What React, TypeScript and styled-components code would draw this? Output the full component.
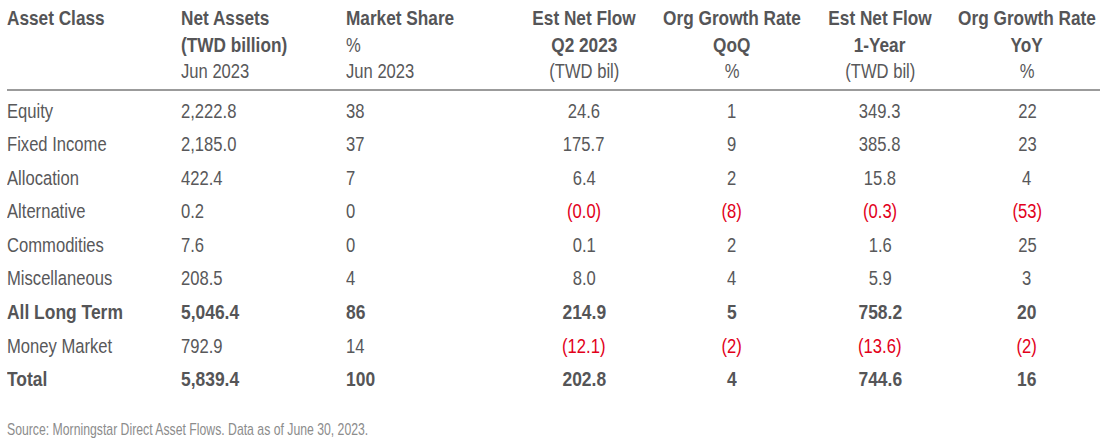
import React from 'react';
import styled, { createGlobalStyle, css } from 'styled-components';

const GlobalStyle = createGlobalStyle`
  html, body {
    margin: 0;
    padding: 0;
    background: #ffffff;
  }
  body {
    font-family: 'Liberation Sans', Arial, sans-serif;
    color: #58585a;
  }
`;

// column widths so the centred columns sit where the original chart has them
const COLUMNS = '174px 165px 164px 148px 148px 148px 146px';

const Page = styled.div`
  padding: 5px 8px 0 7px;
  width: 1093px;
`;

const Table = styled.div`
  display: grid;
  grid-template-columns: ${COLUMNS};
`;

// Arial squeezed to read like the condensed face of the original
const Narrow = styled.span<{ $center?: boolean; $squeeze?: number }>`
  display: inline-block;
  white-space: nowrap;
  transform: scaleX(${(p) => p.$squeeze ?? 0.81});
  transform-origin: ${(p) => (p.$center ? 'center' : 'left')} center;
`;

const HeadCell = styled.div<{ $center?: boolean }>`
  display: flex;
  flex-direction: column;
  align-items: ${(p) => (p.$center ? 'center' : 'flex-start')};
  line-height: 26.5px;
  padding-bottom: 4px;
  border-bottom: 2px solid #9b9b9b;
`;

const HeadTitle = styled(Narrow)`
  font-size: 21px;
  font-weight: 700;
  color: #555557;
`;

const HeadSub = styled(Narrow)`
  font-size: 20.5px;
  font-weight: 400;
`;

const Cell = styled.div<{ $center?: boolean; $bold?: boolean; $neg?: boolean; $first?: boolean }>`
  font-size: ${(p) => (p.$bold ? 21 : 20.5)}px;
  line-height: 33.6px;
  white-space: nowrap;
  text-align: ${(p) => (p.$center ? 'center' : 'left')};
  font-weight: ${(p) => (p.$bold ? 700 : 400)};
  color: ${(p) => (p.$neg ? '#e2001a' : p.$bold ? '#555557' : '#58585a')};
  ${(p) =>
    p.$first &&
    css`
      margin-top: 3px;
    `}
`;

const Source = styled.p`
  margin: 24px 0 0;
  font-size: 17px;
  line-height: 19px;
  color: #8c8c8c;
`;

type Row = {
  label: string;
  values: string[];
  bold?: boolean;
};

const headers: { lines: string[]; sub: string[]; center?: boolean }[] = [
  { lines: ['Asset Class'], sub: ['\u00a0', '\u00a0'] },
  { lines: ['Net Assets', '(TWD billion)'], sub: ['Jun 2023'] },
  { lines: ['Market Share'], sub: ['%', 'Jun 2023'] },
  { lines: ['Est Net Flow', 'Q2 2023'], sub: ['(TWD bil)'], center: true },
  { lines: ['Org Growth Rate', 'QoQ'], sub: ['%'], center: true },
  { lines: ['Est Net Flow', '1-Year'], sub: ['(TWD bil)'], center: true },
  { lines: ['Org Growth Rate', 'YoY'], sub: ['%'], center: true },
];

const rows: Row[] = [
  { label: 'Equity', values: ['2,222.8', '38', '24.6', '1', '349.3', '22'] },
  { label: 'Fixed Income', values: ['2,185.0', '37', '175.7', '9', '385.8', '23'] },
  { label: 'Allocation', values: ['422.4', '7', '6.4', '2', '15.8', '4'] },
  { label: 'Alternative', values: ['0.2', '0', '(0.0)', '(8)', '(0.3)', '(53)'] },
  { label: 'Commodities', values: ['7.6', '0', '0.1', '2', '1.6', '25'] },
  { label: 'Miscellaneous', values: ['208.5', '4', '8.0', '4', '5.9', '3'] },
  { label: 'All Long Term', values: ['5,046.4', '86', '214.9', '5', '758.2', '20'], bold: true },
  { label: 'Money Market', values: ['792.9', '14', '(12.1)', '(2)', '(13.6)', '(2)'] },
  { label: 'Total', values: ['5,839.4', '100', '202.8', '4', '744.6', '16'], bold: true },
];

export default function App() {
  return (
    <>
      <GlobalStyle />
      <Page>
        <Table>
          {headers.map((h, i) => (
            <HeadCell key={i} $center={h.center}>
              {h.lines.map((l) => (
                <HeadTitle key={l} $squeeze={0.82} $center={h.center}>
                  {l}
                </HeadTitle>
              ))}
              {h.sub.map((s, j) => (
                <HeadSub key={j} $center={h.center}>
                  {s}
                </HeadSub>
              ))}
            </HeadCell>
          ))}
          {rows.map((r, ri) => {
            const squeeze = r.bold ? 0.83 : 0.81;
            return (
              <React.Fragment key={r.label}>
                <Cell $bold={r.bold} $first={ri === 0}>
                  <Narrow $squeeze={squeeze}>{r.label}</Narrow>
                </Cell>
                {r.values.map((v, vi) => {
                  const center = vi >= 2;
                  return (
                    <Cell
                      key={vi}
                      $first={ri === 0}
                      $bold={r.bold}
                      $center={center}
                      $neg={v.startsWith('(')}
                    >
                      <Narrow $squeeze={squeeze} $center={center}>
                        {v}
                      </Narrow>
                    </Cell>
                  );
                })}
              </React.Fragment>
            );
          })}
        </Table>
        <Source>
          <Narrow $squeeze={0.72}>Source: Morningstar Direct Asset Flows. Data as of June 30, 2023.</Narrow>
        </Source>
      </Page>
    </>
  );
}
